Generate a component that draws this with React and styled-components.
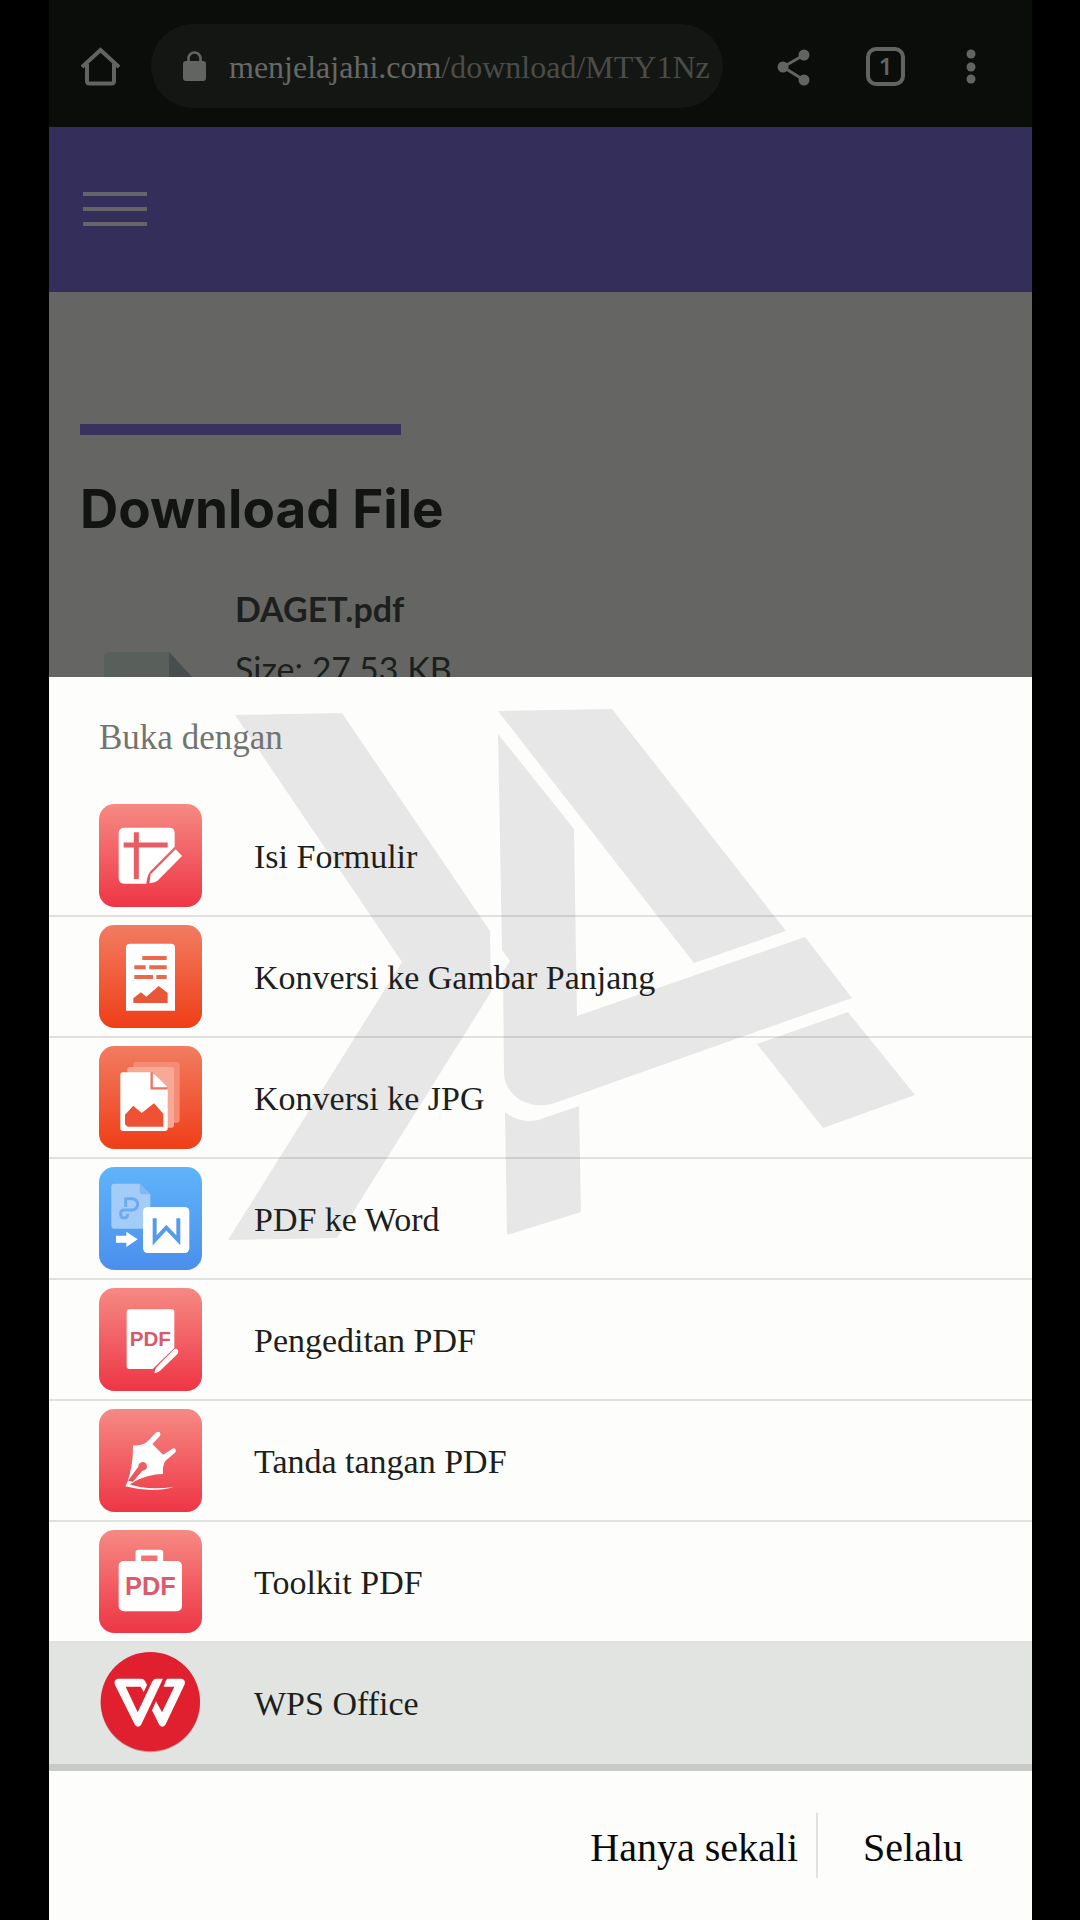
import React from "react";
import styled, { createGlobalStyle } from "styled-components";

const serif = '"Liberation Serif", "Times New Roman", serif';

const GlobalStyle = createGlobalStyle`
  *, *::before, *::after { box-sizing: border-box; }
  body { margin: 0; background: #000; }
  button { border: 0; padding: 0; background: none; color: inherit; font: inherit; text-align: left; cursor: pointer; }
  svg { display: block; }
`;

const Screen = styled.div`
  height: 100vh;
  padding: 0 48px 0 49px;
  display: flex;
  flex-direction: column;
  background: #000;
  font-family: ${serif};
`;

const Browser = styled.div`
  flex: 1;
  min-height: 0;
  overflow: hidden;
  background: #656663;
`;

const Toolbar = styled.header`
  height: 127px;
  padding: 24px 42px 19px 32px;
  display: flex;
  align-items: center;
  background: #0a0d0a;
  color: #626462;
`;

const ToolButton = styled.button`
  flex: none;
  width: 39px;
  height: 39px;
  margin-left: ${(p) => p.$gap || 0}px;
`;

const AddressBar = styled.button`
  flex: 1;
  min-width: 0;
  height: 84px;
  margin-left: 31px;
  padding: 0 16px 0 32px;
  border-radius: 42px;
  display: flex;
  align-items: center;
  gap: 23px;
  background: #141613;
`;

const LockIcon = styled.svg`
  flex: none;
`;

const Url = styled.span`
  padding-top: 2px;
  white-space: nowrap;
  font-size: 32px;
  line-height: 44px;
  color: #4a4c4a;
`;

const Domain = styled.span`
  color: #666866;
`;

const TabCount = styled.button`
  flex: none;
  width: 39px;
  height: 39px;
  margin-left: 52px;
  border: 4px solid #626462;
  border-radius: 10px;
  font: 600 24px/30px "Noto Sans", sans-serif;
  text-align: center;
`;

const SiteHeader = styled.div`
  height: 165px;
  padding: 0 34px;
  display: flex;
  align-items: center;
  background: #332e5a;
`;

const MenuButton = styled.button`
  width: 64px;
  padding-bottom: 2px;
  display: grid;
  gap: 11px;
`;

const MenuLine = styled.span`
  height: 4px;
  background: #666369;
`;

const Article = styled.main`
  padding: 132px 31px 0;
`;

const Accent = styled.div`
  width: 321px;
  height: 11px;
  background: #39325d;
`;

const Title = styled.h1`
  margin: 44px 0 0;
  font: 700 53px/60px Inter, "Open Sans", sans-serif;
  color: #121411;
`;

const FileRow = styled.div`
  margin-top: 40px;
  display: flex;
`;

const FileIcon = styled.svg`
  flex: none;
  margin: 73px 43px 0 24px;
`;

const FileInfo = styled.div`
  font: 400 34px/60px Lato, sans-serif;
  color: #1c1f1d;
`;

const FileName = styled.div`
  font-weight: 700;
`;

const Sheet = styled.section`
  position: relative;
  flex: none;
  background: #fdfefc;
  color: #1d1f1d;
`;

const Watermark = styled.svg`
  position: absolute;
  left: 0;
  top: 0;
  pointer-events: none;
`;

const SheetTitle = styled.h2`
  position: relative;
  margin: 0;
  padding: 39px 50px 36px;
  font-size: 35px;
  font-weight: 400;
  line-height: 44px;
  color: #737472;
`;

const AppList = styled.ul`
  position: relative;
  margin: 0;
  padding: 0;
  list-style: none;
`;

const AppRow = styled.button`
  width: 100%;
  height: 121px;
  padding-left: 50px;
  display: flex;
  align-items: center;
  gap: 52px;
  border-bottom: 2px solid ${(p) => (p.$selected ? "transparent" : "rgba(30, 40, 30, 0.13)")};
  background: ${(p) => (p.$selected ? "#e2e4e1" : "transparent")};
  font-size: 34px;
  line-height: 44px;
`;

const AppLabel = styled.span`
  padding-top: 2px;
`;

const AppIcon = styled.svg`
  flex: none;
`;

const Footer = styled.footer`
  height: 156px;
  padding-right: 69px;
  border-top: 7px solid #c8cac7;
  display: flex;
  align-items: center;
  justify-content: flex-end;
  color: #080a08;
`;

const Action = styled.button`
  padding-top: 4px;
  font-size: 40px;
  line-height: 65px;
`;

const Separator = styled.span`
  width: 2px;
  height: 65px;
  margin: 0 45px 0 18px;
  background: #e1e2e1;
`;

function Tile({ box, id, from, to, children }) {
  const [x, y] = box;
  return (
    <AppIcon width="103" height="103" viewBox={`${x} ${y} 309 309`} aria-hidden="true">
      <linearGradient id={id} x1="0" y1="0" x2="0" y2="1">
        <stop offset="0" stopColor={from} />
        <stop offset="1" stopColor={to} />
      </linearGradient>
      <rect x={x} y={y} width="309" height="309" rx="46" fill={`url(#${id})`} />
      {children}
    </AppIcon>
  );
}

const pink = { from: "#f68a84", to: "#ee3545" };
const orange = { from: "#f27c60", to: "#ef3e18" };

const FormIcon = () => (
  <Tile box={[59, 72]} id="form" {...pink}>
    <path d="M135 143H270Q286 143 286 159V200L212 275Q204 286 201 311H135Q118 311 118 294V160Q118 143 135 143Z" fill="#fff" />
    <path d="M133 195H265M171 157V297" stroke="#e75d63" strokeWidth="15" />
    <path d="M289 208L308 228L236 301Q229 308 210 310L214 283Z" fill="#fff" strokeLinejoin="round" />
  </Tile>
);

const LongImageIcon = () => (
  <Tile box={[59, 435]} id="long" {...orange}>
    <path d="M152 491H275Q287 491 287 503V692H140V503Q140 491 152 491Z" fill="#fff" />
    <path d="M189 534H262M165 562H199M210 562H262M165 591H221M231 591H262" stroke="#ea684c" strokeWidth="12" />
    <path d="M162 655L185 637L201 650L238 618L265 639V669H162Z" fill="#e95738" />
  </Tile>
);

const JpgIcon = () => (
  <Tile box={[59, 48]} id="jpg" {...orange}>
    <rect x="162" y="96" width="139" height="182" rx="8" fill="#f58d76" />
    <rect x="144" y="111" width="140" height="182" rx="8" fill="#f8a996" />
    <path d="M131 127H215L265 174V295Q265 303 257 303H131Q123 303 123 295V135Q123 127 131 127Z" fill="#fff" />
    <path d="M217 127V175H265" fill="none" stroke="#f0735a" strokeWidth="7" />
    <path d="M222 130L264 171H222Z" fill="#fff" />
    <path d="M137 254L162 227L187 249L224 220L252 251V290H145L137 283Z" fill="#ee5133" />
  </Tile>
);

const WordIcon = () => (
  <Tile box={[59, 411]} id="word" from="#5fb4fa" to="#4b8fec">
    <path d="M105 461H181L213 493V596H105Q96 596 96 587V470Q96 461 105 461Z" fill="#a3ccf9" />
    <path d="M181 461V484Q181 493 190 493H213Z" fill="#7fb8f4" />
    <path d="M139 531V506H158A17 17 0 0 1 158 540H134Q124 540 124 552Q124 564 134 564Q145 564 145 552" fill="none" stroke="#6dabef" strokeWidth="9" />
    <rect x="191" y="531" width="139" height="138" rx="14" fill="#fff" />
    <path d="M226 565V631L261 593L297 631V565" fill="none" stroke="#569bea" strokeWidth="12" />
    <path d="M110 617H141V605L175 628L141 651V638H110Z" fill="#fff" />
  </Tile>
);

const EditIcon = () => (
  <Tile box={[59, 54]} id="edit" {...pink}>
    <path d="M150 118H277Q285 118 285 126V234L220 297H150Q142 297 142 289V126Q142 118 150 118Z" fill="#fff" />
    <text x="213" y="228" textAnchor="middle" fontFamily="Liberation Sans, sans-serif" fontWeight="700" fontSize="62" fill="#d9596a">PDF</text>
    <path d="M283 239Q290 234 295 239Q299 244 295 251L244 301Q236 309 226 310Q224 300 232 291Z" fill="#fff" />
  </Tile>
);

const SignIcon = () => (
  <Tile box={[59, 417]} id="sign" {...pink}>
    <path d="M161 526Q190 528 206 513L231 487Q237 483 242 488Q246 494 241 499L219 522L251 554L278 537Q285 532 289 539Q291 544 286 549L257 574Q249 590 251 612Q205 612 158 638L189 602A13 13 0 1 0 177 590L145 634Q162 584 161 526Z" fill="#fff" />
    <path d="M138 649L146 632L164 636L151 643Q205 662 285 650Q220 670 138 649Z" fill="#fff" />
  </Tile>
);

const ToolkitIcon = () => (
  <Tile box={[59, 61]} id="toolkit" {...pink}>
    <path d="M177 158V129H243V158" fill="none" stroke="#fff" strokeWidth="17" strokeLinejoin="round" />
    <rect x="118" y="154" width="190" height="151" rx="15" fill="#fff" />
    <text x="213" y="257" textAnchor="middle" fontFamily="Liberation Sans, sans-serif" fontWeight="700" fontSize="76" fill="#dc5a6a">PDF</text>
  </Tile>
);

const WpsIcon = () => (
  <AppIcon width="103" height="103" viewBox="0 4 309 309" aria-hidden="true">
    <circle cx="154" cy="159" r="149" fill="#b9a5a5" />
    <circle cx="154" cy="156" r="149" fill="#e0202e" />
    <g fill="#fff">
      <path d="M56 87H126Q134 87 138 94L144 106L134 127L125 111H80L116 188L159 97Q164 87 172 87H192L126 226Q117 236 108 226L47 104Q44 90 56 87Z" />
      <path d="M205 87H248Q261 90 257 104L199 226Q190 236 181 226L159 182L171 155L189 188L226 111H194L199 97Q201 89 205 87Z" />
    </g>
  </AppIcon>
);

const apps = [
  { label: "Isi Formulir", Icon: FormIcon },
  { label: "Konversi ke Gambar Panjang", Icon: LongImageIcon },
  { label: "Konversi ke JPG", Icon: JpgIcon },
  { label: "PDF ke Word", Icon: WordIcon },
  { label: "Pengeditan PDF", Icon: EditIcon },
  { label: "Tanda tangan PDF", Icon: SignIcon },
  { label: "Toolkit PDF", Icon: ToolkitIcon },
  { label: "WPS Office", Icon: WpsIcon, selected: true },
];

export default function App() {
  return (
    <Screen>
      <GlobalStyle />
      <Browser>
        <Toolbar>
          <ToolButton aria-label="Home">
            <svg width="39" height="39" viewBox="0 0 39 39" fill="none" stroke="currentColor" strokeWidth="4">
              <path d="M1 20L19.500 3L38 20" />
              <path d="M6 17V34Q6 36.500 8.500 36.500H30.500Q33 36.500 33 34V17" />
            </svg>
          </ToolButton>
          <AddressBar>
            <LockIcon width="23" height="30" viewBox="0 0 23 30" aria-hidden="true">
              <rect y="10" width="23" height="20" rx="3" fill="currentColor" />
              <path d="M5.500 11V7.500A6 6 0 0 1 17.500 7.500V11" fill="none" stroke="currentColor" strokeWidth="2.600" />
            </LockIcon>
            <Url>
              <Domain>menjelajahi.com</Domain>/download/MTY1Nz
            </Url>
          </AddressBar>
          <ToolButton $gap={52} aria-label="Bagikan">
            <svg width="39" height="39" viewBox="0 0 39 39" fill="currentColor">
              <path d="M29 8L8 20L29 33" fill="none" stroke="currentColor" strokeWidth="3" />
              <circle cx="29" cy="8" r="5.500" />
              <circle cx="8" cy="20" r="5.500" />
              <circle cx="29" cy="33" r="5.500" />
            </svg>
          </ToolButton>
          <TabCount aria-label="1 tab">1</TabCount>
          <ToolButton $gap={46} aria-label="Menu">
            <svg width="39" height="39" viewBox="0 0 39 39" fill="currentColor">
              <circle cx="20" cy="7" r="4.500" />
              <circle cx="20" cy="20" r="4.500" />
              <circle cx="20" cy="32" r="4.500" />
            </svg>
          </ToolButton>
        </Toolbar>
        <SiteHeader>
          <MenuButton aria-label="Navigasi">
            <MenuLine />
            <MenuLine />
            <MenuLine />
          </MenuButton>
        </SiteHeader>
        <Article>
          <Accent />
          <Title>Download File</Title>
          <FileRow>
            <FileIcon width="88" height="110" viewBox="0 0 88 110" aria-hidden="true">
              <path d="M5 0H65L88 25V110H0V5Q0 0 5 0Z" fill="#595f5b" />
              <path d="M65 0L88 25H65Z" fill="#484e4d" />
            </FileIcon>
            <FileInfo>
              <FileName>DAGET.pdf</FileName>
              <div>Size: 27.53 KB</div>
            </FileInfo>
          </FileRow>
        </Article>
      </Browser>

      <Sheet aria-labelledby="open-with">
        <Watermark width="983" height="620" viewBox="49 677 983 620" fill="#e7e7e7" aria-hidden="true">
          <path d="M235 715L342 713L490 931L491 992L337 1238L228 1240L402 962Z" />
          <path d="M498 711L612 709L786 931L694 963Z" />
          <path d="M498 734L574 829L577 1016L805 937L852 998L552 1104C526 1110 504 1094 504 1072L503 971L510 961L502 950Z" />
          <path d="M505 1112Q520 1124 538 1120L579 1106L581 1212L507 1235Z" />
          <path d="M848 1012L915 1095L823 1128L757 1044Z" />
        </Watermark>
        <SheetTitle id="open-with">Buka dengan</SheetTitle>
        <AppList>
          {apps.map(({ label, Icon, selected }) => (
            <li key={label}>
              <AppRow $selected={selected} aria-pressed={Boolean(selected)}>
                <Icon />
                <AppLabel>{label}</AppLabel>
              </AppRow>
            </li>
          ))}
        </AppList>
        <Footer>
          <Action>Hanya sekali</Action>
          <Separator />
          <Action>Selalu</Action>
        </Footer>
      </Sheet>
    </Screen>
  );
}
